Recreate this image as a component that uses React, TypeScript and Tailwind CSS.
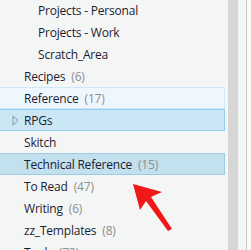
const ROWS: { name: string; count?: number; indent?: boolean; state?: 'hover' | 'selected' | 'active'; caret?: boolean }[] = [
  { name: 'Projects - Personal', indent: true },
  { name: 'Projects - Work', indent: true },
  { name: 'Scratch_Area', indent: true },
  { name: 'Recipes', count: 6 },
  { name: 'Reference', count: 17, state: 'hover' },
  { name: 'RPGs', state: 'selected', caret: true },
  { name: 'Skitch' },
  { name: 'Technical Reference', count: 15, state: 'active' },
  { name: 'To Read', count: 47 },
  { name: 'Writing', count: 6 },
  { name: 'zz_Templates', count: 8 },
  { name: 'Tools', count: 72 },
];

const STATE_CLASS = {
  hover: 'bg-[#eef7fe] border-[#cfe8f8]',
  selected: 'bg-[#cbe7f6] border-[#94cdec]',
  active: 'bg-[#c3e0ef] border-[#9ccbe6]',
};

export default function App() {
  return (
    <div
      className="relative flex h-[250px] w-[251px] overflow-hidden bg-[#f4f5f5] text-[12px] tracking-[-0.2px] text-[#1c1c30]"
      style={{ fontFamily: '"Open Sans", "Noto Sans", sans-serif' }}
    >
      <ul className="-mt-px w-[225px] shrink-0">
        {ROWS.map((r) => (
          <li
            key={r.name}
            className={`relative flex h-[22px] items-center border border-l-0 pt-[2px] ${r.state ? STATE_CLASS[r.state] : 'border-transparent'} ${r.indent ? 'pl-[38px]' : 'pl-[24px]'}`}
          >
            {r.caret && (
              <svg className="absolute left-[12px] top-[5px]" width="7" height="11" viewBox="0 0 7 11">
                <path d="M1 1 L6 5.5 L1 10 Z" fill="none" stroke="#8f9499" strokeWidth="1" />
              </svg>
            )}
            <span>{r.name}</span>
            {r.count !== undefined && <span className="ml-[6px] text-[#8e8e8e]">({r.count})</span>}
          </li>
        ))}
      </ul>
      <div className="ml-[3px] w-[10px] shrink-0 bg-[#d6d6d6]" />
      <div className="w-[8px] shrink-0 bg-[#f3f4f4]" />
      <div className="w-px shrink-0 bg-[#c6c6c6]" />
      <div className="flex-1 bg-[#fbfbfb]" />
      <svg className="absolute left-0 top-0" width="251" height="250" viewBox="0 0 251 250">
        <polygon points="133,184 162,192 151,197 172,229 168,231 146,201 140,210" fill="#f01818" />
      </svg>
    </div>
  );
}
